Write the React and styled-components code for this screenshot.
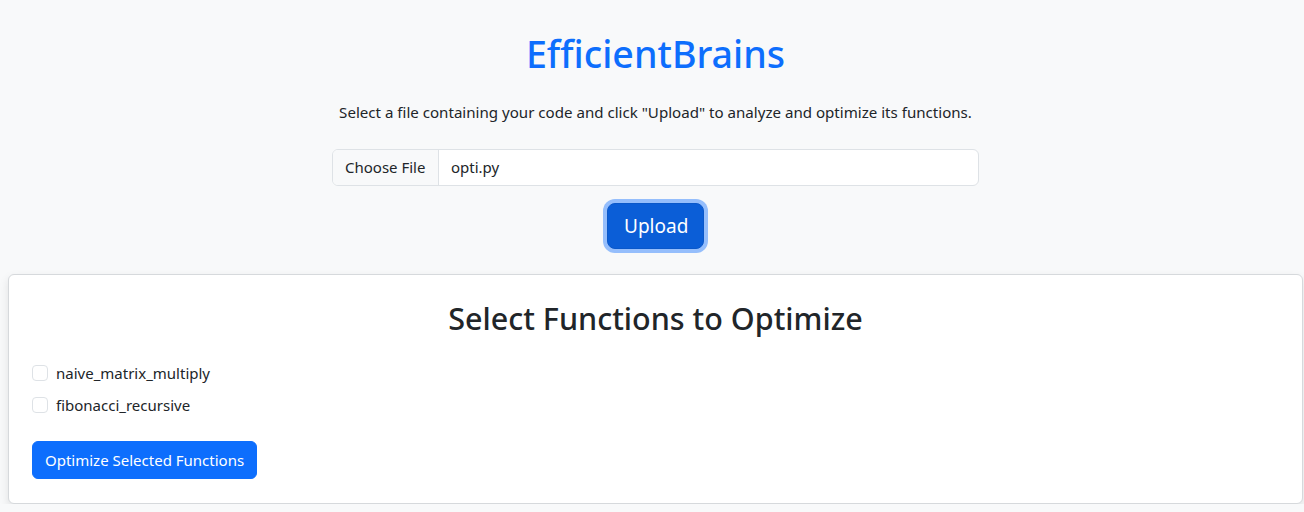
import React from "react";
import styled, { createGlobalStyle } from "styled-components";

const Global = createGlobalStyle`
  html, body { margin: 0; padding: 0; }
  body {
    background: #f8f9fa;
    color: #212529;
    font-family: "Noto Sans", "Open Sans", sans-serif;
    font-size: 16px;
    line-height: 1.5;
  }
  * { box-sizing: border-box; }
`;

const Page = styled.div`
  margin-left: 8px;
  width: 1295px;
  padding-top: 30px;
  display: flex;
  flex-direction: column;
  align-items: center;
`;

const Title = styled.h1`
  margin: 0 0 22px;
  font-size: 37.6px;
  line-height: 48px;
  font-weight: 500;
  color: #0d6efd;
`;

const Lead = styled.p`
  margin: 0 0 25px;
  font-size: 15.1px;
  line-height: 24px;
`;

const FileField = styled.label`
  display: flex;
  width: 647px;
  height: 37px;
  border: 1px solid #dee2e6;
  border-radius: 6px;
  background: #fff;
  overflow: hidden;
  font-size: 15px;
  margin-bottom: 13px;
`;

const ChooseButton = styled.span`
  display: flex;
  align-items: center;
  padding: 0 12px;
  background: #f8f9fa;
  border-right: 1px solid #dee2e6;
  width: 106px;
  color: #212529;
`;

const FileName = styled.span`
  display: flex;
  align-items: center;
  padding: 0 12px;
`;

const UploadButton = styled.button`
  font-family: inherit;
  font-size: 19px;
  line-height: 30px;
  padding: 7px 16px;
  border: 1px solid #0a58ca;
  border-radius: 8px;
  background: #0b5ed7;
  color: #fff;
  box-shadow: 0 0 0 4px rgba(49, 132, 253, 0.5);
  margin: 4px 0 25px;
  width: 97px;
`;

const Card = styled.section`
  width: 1295px;
  background: #fff;
  border: 1px solid #d6d9dc;
  border-radius: 6px;
  box-shadow: 0 4px 10px rgba(0, 0, 0, 0.1);
  padding: 24px 23px 24px;
`;

const CardTitle = styled.h2`
  margin: 0 0 24px;
  text-align: center;
  font-size: 30.5px;
  line-height: 38px;
  font-weight: 500;
`;

const CheckRow = styled.label`
  display: flex;
  align-items: center;
  gap: 8px;
  margin-bottom: 8px;
  font-size: 15px;
  line-height: 24px;
`;

const Check = styled.input.attrs({ type: "checkbox" })`
  appearance: none;
  width: 16px;
  height: 16px;
  margin: 0;
  border: 1px solid #dee2e6;
  border-radius: 4px;
  background: #fff;
`;

const PrimaryButton = styled.button`
  margin-top: 16px;
  font-family: inherit;
  font-size: 15px;
  line-height: 24px;
  padding: 6px 12px;
  border: 1px solid #0d6efd;
  border-radius: 6px;
  background: #0d6efd;
  color: #fff;
`;

const functions = ["naive_matrix_multiply", "fibonacci_recursive"];

export default function App() {
  return (
    <>
      <Global />
      <Page>
        <Title>EfficientBrains</Title>
        <Lead>
          Select a file containing your code and click "Upload" to analyze and optimize its functions.
        </Lead>
        <FileField>
          <ChooseButton>Choose File</ChooseButton>
          <FileName>opti.py</FileName>
        </FileField>
        <UploadButton>Upload</UploadButton>
        <Card>
          <CardTitle>Select Functions to Optimize</CardTitle>
          {functions.map((f) => (
            <CheckRow key={f}>
              <Check />
              {f}
            </CheckRow>
          ))}
          <PrimaryButton>Optimize Selected Functions</PrimaryButton>
        </Card>
      </Page>
    </>
  );
}
